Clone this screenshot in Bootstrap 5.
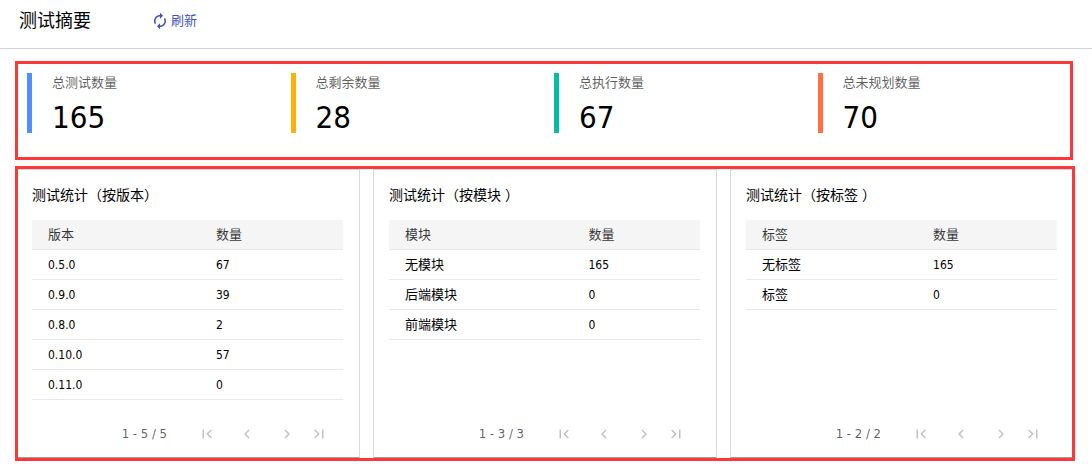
<!DOCTYPE html>
<html lang="zh-CN">
<head>
<meta charset="utf-8">
<meta name="viewport" content="width=device-width, initial-scale=1">
<title>测试摘要</title>
<link href="https://cdn.jsdelivr.net/npm/bootstrap@5.3.0/dist/css/bootstrap.min.css" rel="stylesheet">
<style>
  body { font-family: "DejaVu Sans Condensed", "Noto Sans CJK SC", sans-serif; font-size: 13px; line-height: 20px; color: #000; }
  .page-head { height: 49px; padding: 0 19px 6px; border-bottom: 1px solid #d3d3d3; gap: 60px; }
  .page-head h1 { font-size: 18px; line-height: 24px; font-weight: 400; }
  .refresh { color: #3f51b5; font-size: 13px; line-height: 20px; gap: 2px; }
  .icon { width: 18px; height: 18px; fill: currentColor; display: block; }
  .page-body { padding: 12px 17px 5px 15px; }
  .summary-box { border: 3px solid #fd3838; padding: 9px 0 24px 9px; margin: 0 2px 6px 0; }
  .summary-grid { display: grid; grid-template-columns: repeat(4, 1fr); margin-right: -11px; }
  .stat { border-left: 5px solid; padding-left: 20px; height: 60px; }
  .stat-blue { border-color: #4d90fe; }
  .stat-amber { border-color: #ffb100; }
  .stat-teal { border-color: #00bfa5; }
  .stat-orange { border-color: #ff7043; }
  .stat dt { color: rgba(0,0,0,.65); font-weight: 400; line-height: 20px; }
  .stat dd { font-size: 31px; line-height: 40px; margin: 4px 0 0; }
  .tables-box { display: grid; grid-template-columns: repeat(3, 1fr); gap: 13px; padding: 3px 1px; position: relative; }
  .tables-box::after { content: ""; position: absolute; inset: 0; border: 3px solid #fd3838; pointer-events: none; }
  .panel { border: 1px solid #d9d9d9; border-bottom-color: #9aa0a0; border-radius: 0; padding: 13px 16px 3px 15px; }
  .panel h2 { font-size: 14px; line-height: 24px; font-weight: 400; margin-bottom: 13px; }
  .data-table { width: 100%; table-layout: fixed; border-collapse: separate; border-spacing: 0; margin-bottom: 14px; }
  .data-table th, .data-table td { height: 30px; padding: 1px 16px 0; line-height: 20px; border-bottom: 1px solid #e8e8e8; font-weight: 400; }
  .data-table thead th { background: #f5f5f5; color: rgba(0,0,0,.8); }
  .data-table th:first-child { border-top-left-radius: 2px; }
  .data-table th:last-child { border-top-right-radius: 2px; }
  .data-table td:last-child, .data-table .version { font-size: 12px; }
  .by-version { width: 54%; }
  .by-module { width: 59%; }
  .by-label { width: 55%; }
  .pager { height: 40px; padding-right: 15px; }
  .pager span { color: rgba(0,0,0,.65); margin-right: 31px; }
  .pager button { color: #c2c2c2; margin-right: 22px; }
  .pager .step-next { margin-right: 14px; }
  .pager .step-last { margin-right: 0; }
</style>
</head>
<body class="bg-white">
<svg class="d-none" aria-hidden="true">
  <symbol id="renew" viewBox="0 0 24 24"><path d="M12 6v3l4-4-4-4v3c-4.42 0-8 3.58-8 8 0 1.57.46 3.03 1.24 4.26L6.7 14.8A5.87 5.87 0 0 1 6 12c0-3.31 2.69-6 6-6zm6.76 1.74L17.3 9.2c.44.84.7 1.79.7 2.8 0 3.31-2.69 6-6 6v-3l-4 4 4 4v-3c4.42 0 8-3.58 8-8 0-1.57-.46-3.03-1.24-4.26z"/></symbol>
  <symbol id="first" viewBox="0 0 24 24"><path d="M18.41 16.59 13.82 12l4.59-4.59L17 6l-6 6 6 6zM6 6h2v12H6z"/></symbol>
  <symbol id="prev" viewBox="0 0 24 24"><path d="M15.41 7.41 14 6l-6 6 6 6 1.41-1.41L10.83 12z"/></symbol>
  <symbol id="next" viewBox="0 0 24 24"><path d="M10 6 8.59 7.41 13.17 12l-4.58 4.59L10 18l6-6z"/></symbol>
  <symbol id="last" viewBox="0 0 24 24"><path d="M5.59 7.41 10.18 12l-4.59 4.59L7 18l6-6-6-6zM16 6h2v12h-2z"/></symbol>
</svg>

<header class="page-head d-flex align-items-center">
  <h1 class="m-0">测试摘要</h1>
  <button type="button" class="refresh btn p-0 border-0 d-flex align-items-center"><svg class="icon"><use href="#renew"/></svg>刷新</button>
</header>

<main class="page-body">
  <section class="summary-box">
    <div class="summary-grid">
      <dl class="stat stat-blue m-0"><dt>总测试数量</dt><dd>165</dd></dl>
      <dl class="stat stat-amber m-0"><dt>总剩余数量</dt><dd>28</dd></dl>
      <dl class="stat stat-teal m-0"><dt>总执行数量</dt><dd>67</dd></dl>
      <dl class="stat stat-orange m-0"><dt>总未规划数量</dt><dd>70</dd></dl>
    </div>
  </section>

  <section class="tables-box">
    <article class="panel card">
      <h2>测试统计（按版本）</h2>
      <table class="data-table">
        <colgroup><col class="by-version"><col></colgroup>
        <thead><tr><th scope="col">版本</th><th scope="col">数量</th></tr></thead>
        <tbody>
          <tr><td class="version">0.5.0</td><td>67</td></tr>
          <tr><td class="version">0.9.0</td><td>39</td></tr>
          <tr><td class="version">0.8.0</td><td>2</td></tr>
          <tr><td class="version">0.10.0</td><td>57</td></tr>
          <tr><td class="version">0.11.0</td><td>0</td></tr>
        </tbody>
      </table>
      <nav class="pager d-flex align-items-center justify-content-end mt-auto" aria-label="按版本分页">
        <span>1 - 5 / 5</span>
        <button type="button" class="btn p-0 border-0" aria-label="首页"><svg class="icon"><use href="#first"/></svg></button>
        <button type="button" class="btn p-0 border-0" aria-label="上一页"><svg class="icon"><use href="#prev"/></svg></button>
        <button type="button" class="btn p-0 border-0 step-next" aria-label="下一页"><svg class="icon"><use href="#next"/></svg></button>
        <button type="button" class="btn p-0 border-0 step-last" aria-label="末页"><svg class="icon"><use href="#last"/></svg></button>
      </nav>
    </article>

    <article class="panel card">
      <h2>测试统计（按模块 ）</h2>
      <table class="data-table">
        <colgroup><col class="by-module"><col></colgroup>
        <thead><tr><th scope="col">模块</th><th scope="col">数量</th></tr></thead>
        <tbody>
          <tr><td>无模块</td><td>165</td></tr>
          <tr><td>后端模块</td><td>0</td></tr>
          <tr><td>前端模块</td><td>0</td></tr>
        </tbody>
      </table>
      <nav class="pager d-flex align-items-center justify-content-end mt-auto" aria-label="按模块分页">
        <span>1 - 3 / 3</span>
        <button type="button" class="btn p-0 border-0" aria-label="首页"><svg class="icon"><use href="#first"/></svg></button>
        <button type="button" class="btn p-0 border-0" aria-label="上一页"><svg class="icon"><use href="#prev"/></svg></button>
        <button type="button" class="btn p-0 border-0 step-next" aria-label="下一页"><svg class="icon"><use href="#next"/></svg></button>
        <button type="button" class="btn p-0 border-0 step-last" aria-label="末页"><svg class="icon"><use href="#last"/></svg></button>
      </nav>
    </article>

    <article class="panel card">
      <h2>测试统计（按标签 ）</h2>
      <table class="data-table">
        <colgroup><col class="by-label"><col></colgroup>
        <thead><tr><th scope="col">标签</th><th scope="col">数量</th></tr></thead>
        <tbody>
          <tr><td>无标签</td><td>165</td></tr>
          <tr><td>标签</td><td>0</td></tr>
        </tbody>
      </table>
      <nav class="pager d-flex align-items-center justify-content-end mt-auto" aria-label="按标签分页">
        <span>1 - 2 / 2</span>
        <button type="button" class="btn p-0 border-0" aria-label="首页"><svg class="icon"><use href="#first"/></svg></button>
        <button type="button" class="btn p-0 border-0" aria-label="上一页"><svg class="icon"><use href="#prev"/></svg></button>
        <button type="button" class="btn p-0 border-0 step-next" aria-label="下一页"><svg class="icon"><use href="#next"/></svg></button>
        <button type="button" class="btn p-0 border-0 step-last" aria-label="末页"><svg class="icon"><use href="#last"/></svg></button>
      </nav>
    </article>
  </section>
</main>
<script src="https://cdn.jsdelivr.net/npm/bootstrap@5.3.0/dist/js/bootstrap.bundle.min.js"></script>
</body>
</html>
